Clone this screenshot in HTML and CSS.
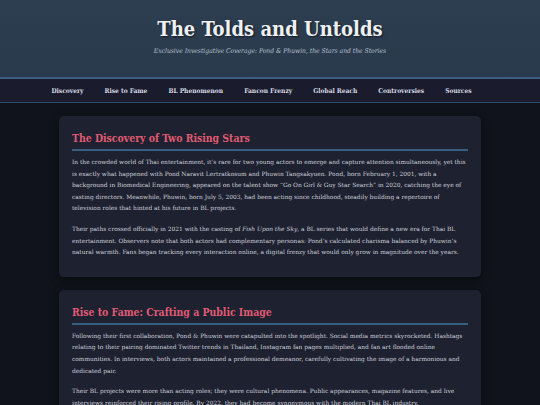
FILE: index.html
```html
<!DOCTYPE html>
<html lang="en">
<head>
<meta charset="utf-8">
<title>The Tolds and Untolds</title>
<link rel="stylesheet" href="styles.css">
</head>
<body>
<header class="site-header">
  <h1 class="site-title">The Tolds and Untolds</h1>
  <p class="site-tagline">Exclusive Investigative Coverage: Pond &amp; Phuwin, the Stars and the Stories</p>
</header>
<nav class="site-nav">
  <a href="#discovery">Discovery</a>
  <a href="#rise">Rise to Fame</a>
  <a href="#bl">BL Phenomenon</a>
  <a href="#fancon">Fancon Frenzy</a>
  <a href="#global">Global Reach</a>
  <a href="#controversies">Controversies</a>
  <a href="#sources">Sources</a>
</nav>
<main class="content">
  <section class="card" id="discovery">
    <h2 class="card-title">The Discovery of Two Rising Stars</h2>
    <p>In the crowded world of Thai entertainment, it’s rare for two young actors to emerge and capture attention simultaneously, yet this is exactly what happened with Pond Naravit Lertratkosum and Phuwin Tangsakyuen. Pond, born February 1, 2001, with a background in Biomedical Engineering, appeared on the talent show “Go On Girl &amp; Guy Star Search” in 2020, catching the eye of casting directors. Meanwhile, Phuwin, born July 5, 2003, had been acting since childhood, steadily building a repertoire of television roles that hinted at his future in BL projects.</p>
    <p>Their paths crossed officially in 2021 with the casting of <em>Fish Upon the Sky</em>, a BL series that would define a new era for Thai BL entertainment. Observers note that both actors had complementary personas: Pond’s calculated charisma balanced by Phuwin’s natural warmth. Fans began tracking every interaction online, a digital frenzy that would only grow in magnitude over the years.</p>
  </section>
  <section class="card" id="rise">
    <h2 class="card-title">Rise to Fame: Crafting a Public Image</h2>
    <p>Following their first collaboration, Pond &amp; Phuwin were catapulted into the spotlight. Social media metrics skyrocketed. Hashtags relating to their pairing dominated Twitter trends in Thailand, Instagram fan pages multiplied, and fan art flooded online communities. In interviews, both actors maintained a professional demeanor, carefully cultivating the image of a harmonious and dedicated pair.</p>
    <p>Their BL projects were more than acting roles; they were cultural phenomena. Public appearances, magazine features, and live interviews reinforced their rising profile. By 2022, they had become synonymous with the modern Thai BL industry.</p>
  </section>
</main>
</body>
</html>
```

FILE: styles.css
```css
* { box-sizing: border-box; }
html, body { margin: 0; padding: 0; }
body {
  background: #10131b;
  font-family: "DejaVu Serif Condensed", "DejaVu Serif", "Liberation Serif", serif;
  color: #c9ccd6;
}
.site-header {
  background: linear-gradient(180deg, #2d3e51 0%, #2a3a4d 100%);
  text-align: center;
  padding: 16px 0 21px;
  border-bottom: 2px solid #3a5d7e;
}
.site-title {
  margin: 0;
  font-size: 20px;
  line-height: 26px;
  font-weight: bold;
  color: #eef1f4;
  text-shadow: 1px 1px 2px rgba(0,0,0,0.6);
}
.site-tagline {
  margin: 5px 0 0;
  font-size: 6.7px;
  line-height: 9px;
  font-style: italic;
  color: #b7c0cc;
}
.site-nav {
  background: #1a1c2d;
  display: flex;
  justify-content: center;
  gap: 21px;
  height: 24px;
  padding-right: 17px;
  align-items: center;
  border-bottom: 1px solid #2c4a66;
}
.site-nav a {
  color: #d4d8e0;
  text-decoration: none;
  font-size: 6.6px;
  font-weight: bold;
}
.content {
  width: 422px;
  margin: 13px auto 0;
  display: flex;
  flex-direction: column;
  gap: 13px;
}
.card {
  background: #1e2130;
  border-radius: 5px;
  padding: 13px 13px 9px;
  box-shadow: 0 3px 10px rgba(0,0,0,0.45);
}
.card-title {
  margin: 0 0 6px;
  font-size: 10.4px;
  line-height: 18px;
  color: #e05b73;
  padding-bottom: 2px;
  border-bottom: 2px solid #36607f;
}
.card p {
  margin: 0 0 9px;
  font-family: "DejaVu Serif", "Liberation Serif", serif;
  font-size: 5.9px;
  line-height: 11.6px;
  color: #cdd0d8;
}
```
